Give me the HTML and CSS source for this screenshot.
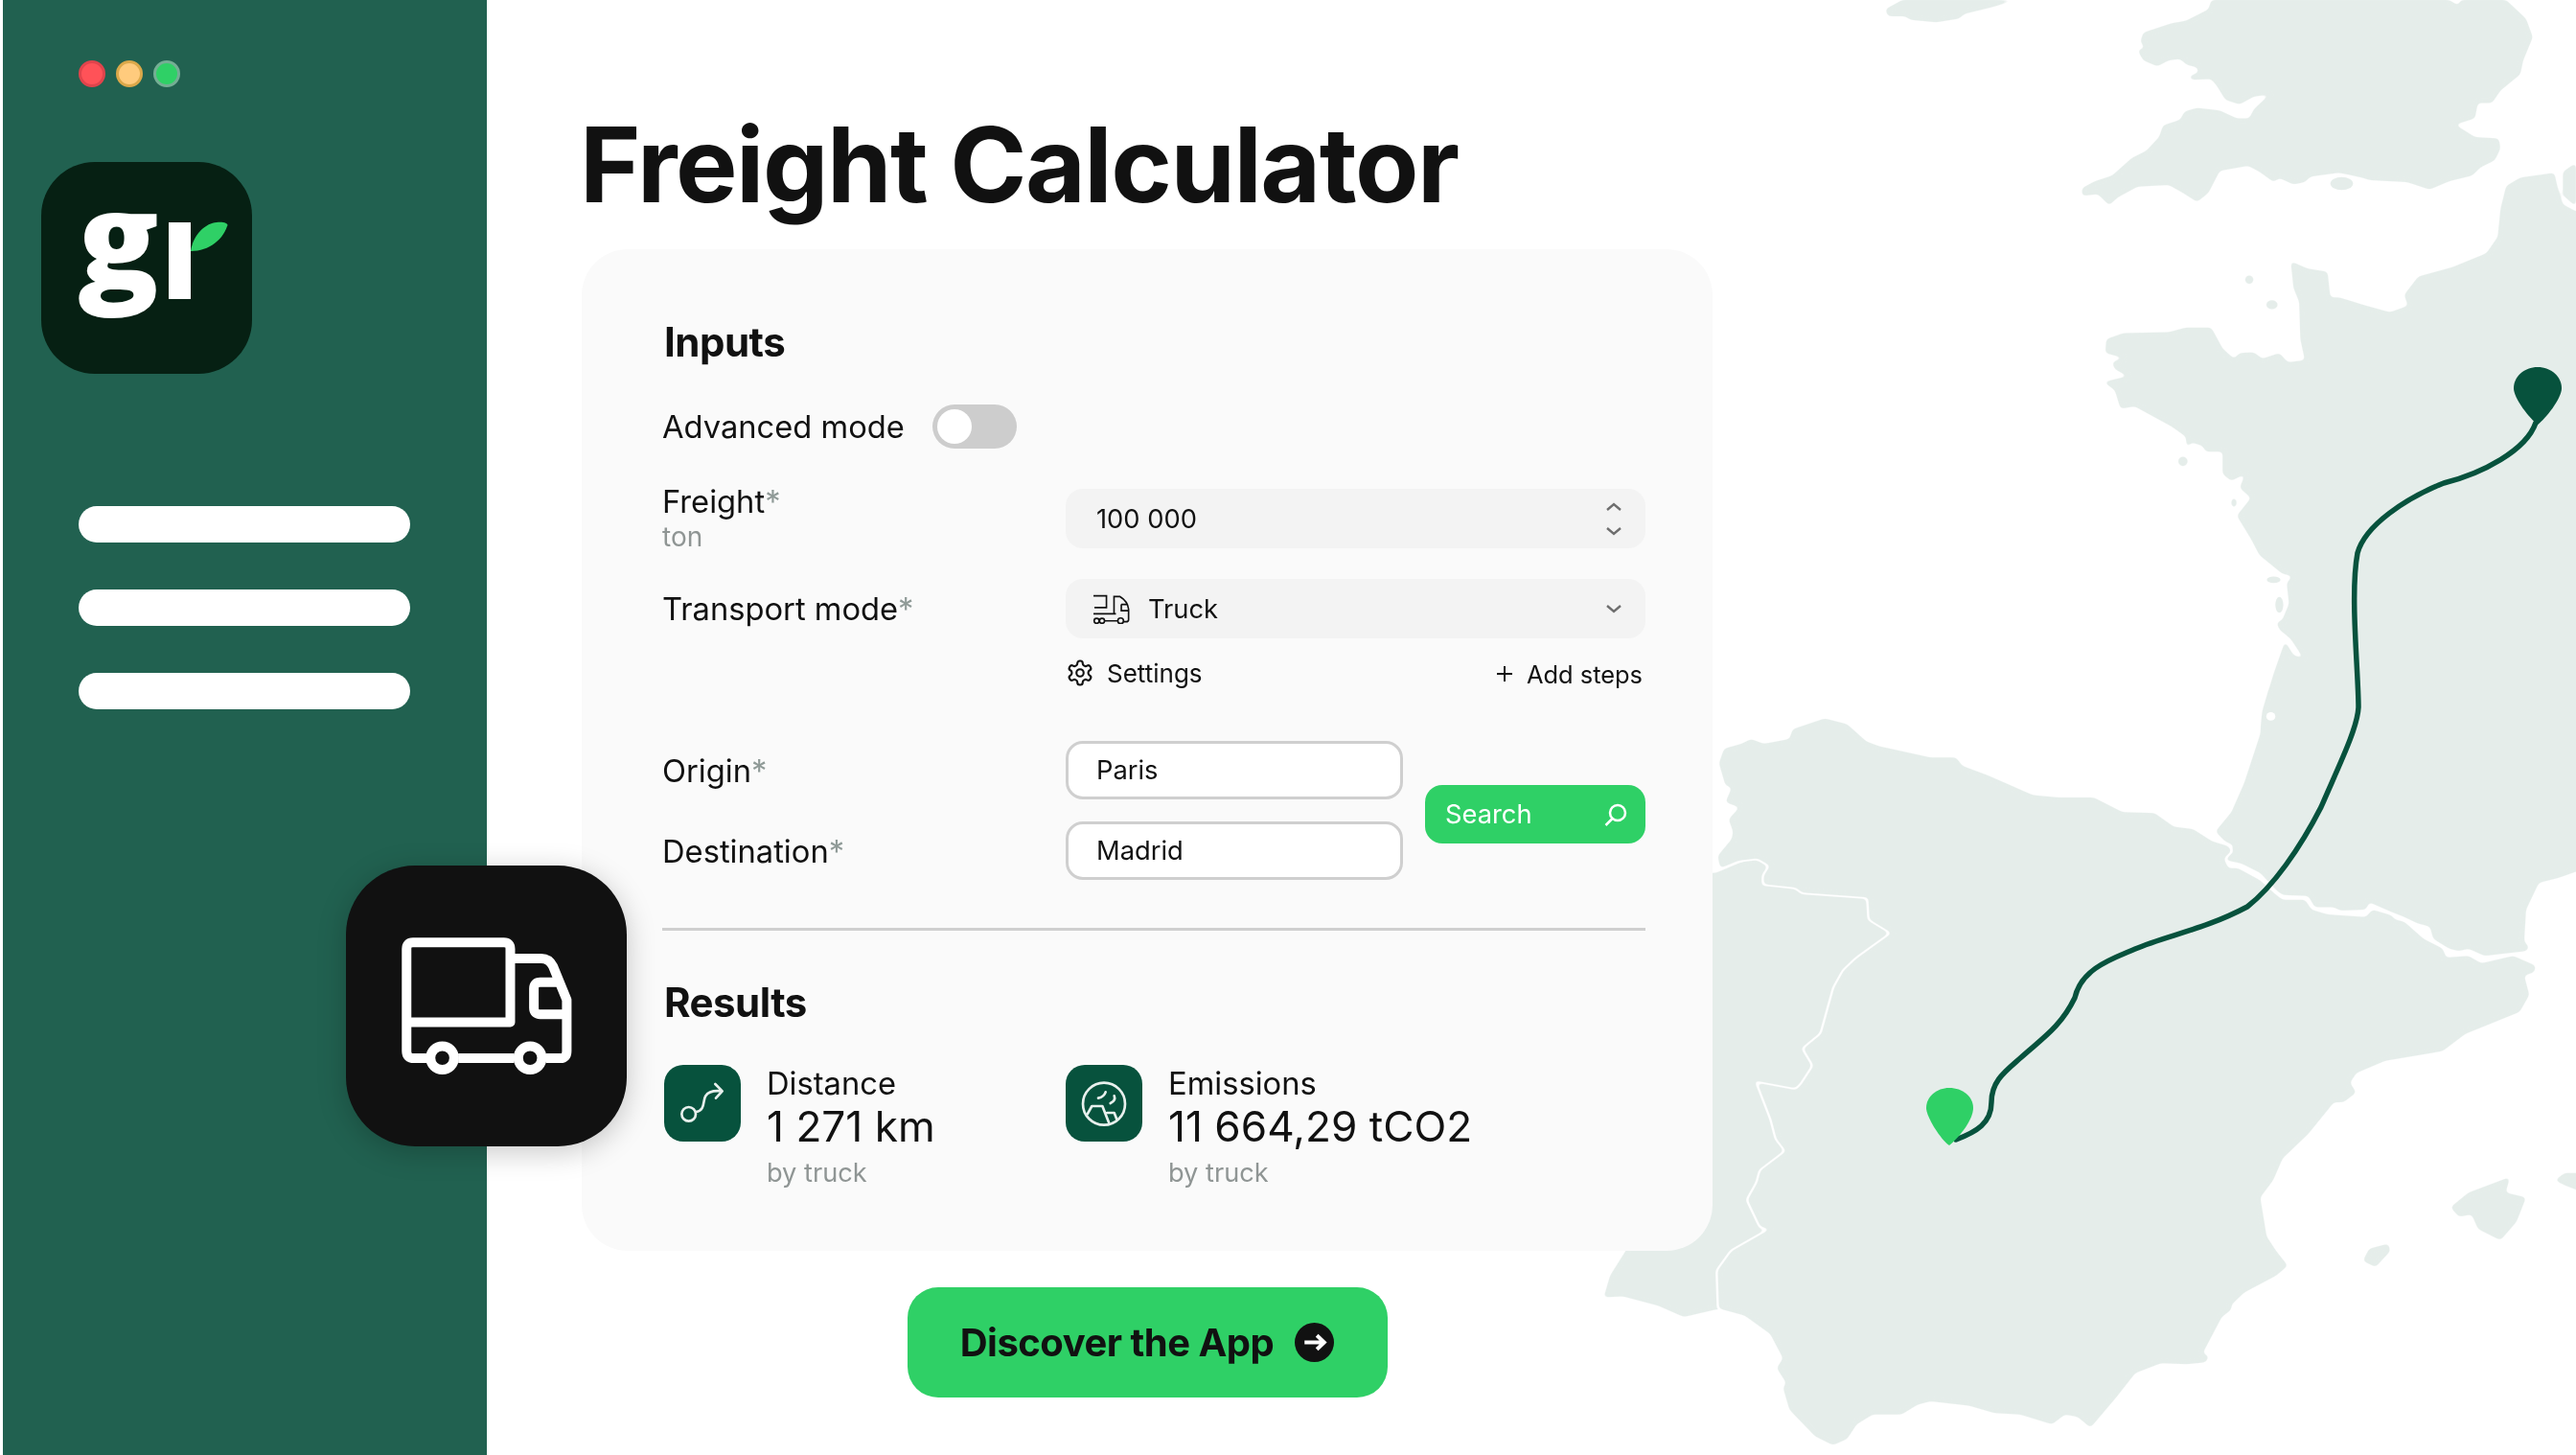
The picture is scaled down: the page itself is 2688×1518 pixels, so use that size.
FILE: index.html
```html
<!DOCTYPE html>
<html lang="en">
<head>
<meta charset="utf-8">
<title>Freight Calculator</title>
<link rel="stylesheet" href="styles.css">
</head>
<body>
<div class="stage">
  <svg class="map" viewBox="0 0 2688 1518" aria-hidden="true">
    <defs>
      <filter id="soft" filterUnits="userSpaceOnUse" x="0" y="0" width="2688" height="1518">
        <feGaussianBlur stdDeviation="2.2"/>
        <feComponentTransfer><feFuncA type="linear" slope="5" intercept="-2"/></feComponentTransfer>
      </filter>
      <path id="spain" d="M230 150L238 120 265 110 280 100 300 110 340 100 345 80 395 58 430 70 460 105 480 115 560 138 600 138 610 155 650 175 720 215 760 220 815 220 860 250 910 252 940 280 970 285 1000 310 1025 320 1030 330 1018 345 1025 365 1040 365 1075 390 1100 420 1110 430 1145 430 1155 450 1180 460 1240 465 1250 450 1280 462 1285 470 1300 475 1330 510 1360 530 1365 548 1400 545 1420 560 1470 545 1505 565 1503 578 1487 585 1495 625 1480 660 1395 705 1360 740 1270 760 1225 785 1215 805 1225 825 1205 845 1190 845 1150 910 1110 960 1095 1005 1075 1040 1085 1120 1100 1150 1118 1180 1100 1200 1050 1235 1030 1260 1030 1270 1015 1285 985 1360 995 1365 990 1378 960 1382 920 1380 880 1400 850 1450 810 1512 790 1490 770 1485 750 1505 700 1485 660 1482 620 1467 560 1458 540 1465 515 1485 470 1485 445 1505 430 1535 408 1548 380 1530 340 1475 330 1430 335 1420 320 1390 330 1370 310 1320 270 1282 230 1268 228 1190 250 1150 290 1120 310 1105 295 1100 275 1045 290 1010 295 985 335 945 320 920 312 880 290 805 350 820 358 810 378 770 362 735 390 705 410 610 425 575 445 550 500 498 465 470 463 425 360 415 350 405 300 398 300 380 310 360 290 345 260 350 232 365 228 340 250 305 252 290 245 265 262 240 240 230 250 200 240 195Z"/>
    </defs>
    <g class="land" filter="url(#soft)">
      <g transform="translate(1760 0) scale(.5918 .4847)">
        <path d="M925 0L920 20 880 45 855 50 805 70 800 90 808 103 795 108 805 130 830 143 850 130 870 127 882 140 900 145 903 155 885 165 890 172 925 170 935 185 950 215 975 225 1000 208 1028 203 1000 235 992 255 970 255 940 238 900 232 878 240 870 258 840 270 833 295 810 325 785 340 750 378 720 390 697 405 697 422 725 418 745 442 760 425 795 402 850 398 875 415 900 435 920 415 940 368 990 357 1010 370 1035 392 1045 383 1070 397 1090 392 1100 380 1150 372 1190 382 1205 388 1270 392 1310 408 1345 390 1385 378 1400 360 1425 345 1435 320 1432 298 1390 295 1355 268 1390 255 1395 222 1420 222 1435 195 1470 160 1475 130 1492 80 1480 40 1445 0 1365 0 1360 12 1345 0Z"/>
        <path d="M380 0L350 20 355 35 385 35 395 43 440 48 480 40 490 30 540 15 580 0Z"/>
        <path d="M320 0L340 5 360 0Z"/>
        <path d="M1530 372L1470 382 1445 400 1435 450 1430 510 1410 545 1350 575 1290 595 1265 635 1272 658 1240 672 1190 655 1150 640 1135 640 1130 585 1095 578 1065 562 1070 620 1080 650 1082 730 1090 775 1060 780 1045 760 1015 772 1000 758 975 760 965 772 945 750 925 705 880 705 850 715 770 717 740 730 738 760 770 770 750 780 755 795 778 810 735 822 755 840 765 880 790 875 855 918 880 940 882 965 890 952 910 960 915 972 945 972 945 1020 960 1035 985 1020 975 1050 995 1072 970 1110 995 1160 1010 1195 1050 1235 1068 1240 1058 1255 1062 1300 1050 1335 1040 1340 1045 1355 1065 1375 1088 1418 1070 1410 1055 1380 1035 1450 1015 1530 1012 1568 2000 1568 2000 455 1568 455 1545 440 1535 400Z"/>
        <path d="M1568 350L1545 370 1545 420 1568 445Z"/>
        <ellipse cx="992" cy="602" rx="8" ry="10"/>
        <ellipse cx="1032" cy="656" rx="11" ry="10"/>
        <ellipse cx="875" cy="993" rx="9" ry="11"/>
        <ellipse cx="965" cy="1082" rx="5" ry="11"/>
      </g>
      <g transform="translate(1640 720) scale(.6684 .5089)">
        <path d="M1088 0L1078 50 1075 90 1050 190 1030 250 1005 290 1020 310 1033 318 1030 335 1020 345 1025 350 1045 355 1075 375 1100 410 1110 420 1150 422 1160 445 1190 445 1200 452 1240 450 1245 435 1280 455 1300 465 1320 478 1340 485 1345 510 1370 530 1385 535 1400 530 1425 545 1490 535 1495 528 1487 515 1490 450 1510 395 1540 385 1640 340 1640 0Z"/>
        <path d="M100 375L225 375 260 355 295 340 320 350 600 400 600 1200 225 1270 175 1285 135 1262 80 1243 50 1245 60 1200 85 1148 100 1100Z"/>
        <path d="M1372 1060L1400 1030 1465 998 1458 1030 1490 1040 1475 1090 1450 1128 1415 1105 1405 1075 1385 1080Z"/>
        <path d="M1235 1170L1245 1145 1275 1135 1278 1150 1255 1183Z"/>
        <path d="M1535 1005L1550 990 1600 990 1600 1040 1550 1015Z"/>
      </g>
    </g>
    <g filter="url(#soft)">
      <use class="halo" href="#spain" transform="translate(1640 720) scale(.6684 .5089)"/>
    </g>
    <g class="land" filter="url(#soft)">
      <use href="#spain" transform="translate(1640 720) scale(.6684 .5089)"/>
    </g>
    <g class="sea" transform="translate(1760 0) scale(.5918 .4847)">
      <ellipse cx="1155" cy="395" rx="26" ry="20"/>
      <ellipse cx="1035" cy="1248" rx="16" ry="14"/>
      <ellipse cx="1045" cy="1302" rx="12" ry="22"/>
      <ellipse cx="1030" cy="1542" rx="8" ry="9"/>
    </g>
    <g class="land" transform="translate(1760 0) scale(.5918 .4847)">
      <ellipse cx="1155" cy="395" rx="20" ry="14"/>
      <ellipse cx="1035" cy="1248" rx="12" ry="7"/>
      <ellipse cx="1045" cy="1302" rx="7" ry="17"/>
    </g>
    <path class="route" d="M2041 1189C2062 1181 2078 1172 2078 1150C2078 1128 2092 1118 2108 1104C2130 1084 2150 1072 2165 1041C2172 1010 2205 1000 2228 990C2260 976 2300 970 2345 946C2372 925 2400 885 2422 842C2440 800 2460 760 2461 738C2461 700 2452 620 2460 577C2468 548 2510 520 2550 504C2590 494 2636 470 2646 441"/>
    <path class="pin-dark" d="M2648 443C2640 437 2623 416 2623 405C2623 393 2634 383 2648 383C2662 383 2673 393 2673 405C2673 416 2656 437 2648 443Z"/>
    <path class="pin-green" d="M2034 1195C2025 1189 2010 1165 2010 1156C2010 1144 2021 1135 2034 1135C2048 1135 2059 1144 2059 1156C2059 1168 2045 1186 2034 1195Z"/>
  </svg>

  <div class="app">
    <aside class="sidebar">
      <div class="dots"><span class="dot dot-red"></span><span class="dot dot-yellow"></span><span class="dot dot-green"></span></div>
      <div class="logo">
        <span class="logo-g">g</span>
        <svg class="logo-mark" viewBox="0 0 220 220" aria-hidden="true">
          <rect x="133" y="63" width="23" height="80" fill="#fff"/>
          <path fill="#2fd066" d="M156 93C158 78 170 64 183 63C192 62 196 65 194 67C190 80 176 93 156 93Z"/>
        </svg>
      </div>
      <nav class="bars"><span class="bar"></span><span class="bar"></span><span class="bar"></span></nav>
    </aside>

    <main class="main">
      <h1 class="title">Freight Calculator</h1>
      <section class="card">
        <h2 class="heading">Inputs</h2>
        <div class="mode-row">
          <span class="label">Advanced mode</span>
          <span class="toggle"><span class="knob"></span></span>
        </div>

        <div class="field-row freight-row">
          <div class="label-stack">
            <span class="label">Freight<i class="req">*</i></span>
            <span class="unit">ton</span>
          </div>
          <div class="input filled">
            <span>100 000</span>
            <span class="spinner">
              <svg class="chev" viewBox="0 0 16 8"><path d="M1 7L8 1L15 7"/></svg>
              <svg class="chev" viewBox="0 0 16 8"><path d="M1 1L8 7L15 1"/></svg>
            </span>
          </div>
        </div>

        <div class="field-row transport-row">
          <span class="label">Transport mode<i class="req">*</i></span>
          <div class="input filled">
            <span class="select-value">
              <svg class="truck-small" viewBox="44 38 118 94">
                <path d="M47 43H88V80H50M47 100H118M112 100V45H130Q155 60 158 85V118Q158 125 150 125H143M124 122H82M135 70H152M135 70V90H158"/>
                <circle cx="57" cy="122" r="8"/><circle cx="74" cy="122" r="8"/><circle cx="133" cy="122" r="9"/>
              </svg>
              Truck
            </span>
            <svg class="chev" viewBox="0 0 16 8"><path d="M1 1L8 7L15 1"/></svg>
          </div>
        </div>

        <div class="field-row links-row">
          <span></span>
          <div class="links">
            <span class="link">
              <svg class="gear" viewBox="0 0 24 24"><path d="M12.22 2h-.44a2 2 0 0 0-2 2v.18a2 2 0 0 1-1 1.73l-.43.25a2 2 0 0 1-2 0l-.15-.08a2 2 0 0 0-2.73.73l-.22.38a2 2 0 0 0 .73 2.73l.15.1a2 2 0 0 1 1 1.72v.51a2 2 0 0 1-1 1.74l-.15.09a2 2 0 0 0-.73 2.73l.22.38a2 2 0 0 0 2.73.73l.15-.08a2 2 0 0 1 2 0l.43.25a2 2 0 0 1 1 1.73V20a2 2 0 0 0 2 2h.44a2 2 0 0 0 2-2v-.18a2 2 0 0 1 1-1.73l.43-.25a2 2 0 0 1 2 0l.15.08a2 2 0 0 0 2.73-.73l.22-.39a2 2 0 0 0-.73-2.73l-.15-.08a2 2 0 0 1-1-1.74v-.5a2 2 0 0 1 1-1.74l.15-.09a2 2 0 0 0 .73-2.73l-.22-.38a2 2 0 0 0-2.73-.73l-.15.08a2 2 0 0 1-2 0l-.43-.25a2 2 0 0 1-1-1.73V4a2 2 0 0 0-2-2z"/><circle cx="12" cy="12" r="3"/></svg>
              Settings
            </span>
            <span class="link link-add">
              <svg class="plus" viewBox="0 0 16 16"><path d="M8 0V16M0 8H16"/></svg>
              Add steps
            </span>
          </div>
        </div>

        <div class="route-grid">
          <span class="label">Origin<i class="req">*</i></span>
          <div class="input outlined">Paris</div>
          <button class="search" type="button">
            Search
            <svg class="search-icon" viewBox="0 0 26 26"><circle cx="15" cy="11" r="8"/><path d="M9.5 17L2.5 24"/></svg>
          </button>
          <span class="label">Destination<i class="req">*</i></span>
          <div class="input outlined">Madrid</div>
        </div>

        <hr class="divider">

        <h2 class="heading results-heading">Results</h2>
        <div class="results">
          <div class="result">
            <span class="result-icon">
              <svg viewBox="25 18 240 240"><circle cx="102" cy="172" r="22"/><path d="M125 165C155 160 145 130 155 115C165 98 185 98 205 100M185 78L207 100L187 122"/></svg>
            </span>
            <div class="result-text">
              <span class="result-name">Distance</span>
              <span class="result-value">1 271 km</span>
              <span class="result-note">by truck</span>
            </div>
          </div>
          <div class="result">
            <span class="result-icon">
              <svg viewBox="20 18 240 240"><circle cx="140" cy="140" r="66"/><path d="M122 122Q140 118 145 103M160 138Q178 130 172 115M88 172L102 147H135L155 198M150 168H172L180 188"/></svg>
            </span>
            <div class="result-text">
              <span class="result-name">Emissions</span>
              <span class="result-value">11 664,29 tCO2</span>
              <span class="result-note">by truck</span>
            </div>
          </div>
        </div>
      </section>
      <a class="cta">
        Discover the App
        <svg class="cta-arrow" viewBox="35 26 124 124"><circle cx="97" cy="88" r="62"/><path d="M66 88H126M105 66L128 88L105 110"/></svg>
      </a>
    </main>
  </div>

  <div class="truck-tile">
    <svg viewBox="63 70 880 878">
      <path d="M273 310H558Q578 310 578 330V560H253V330Q253 310 273 310ZM253 560V650Q253 673 276 673H316M415 673H590M690 673H735Q755 673 755 650V490L712 385Q700 360 675 360H593M725 435H672Q652 435 652 455V515Q652 535 672 535H755"/>
      <circle cx="365" cy="672" r="37"/><circle cx="640" cy="672" r="37"/>
    </svg>
  </div>
</div>
</body>
</html>
```
FILE: styles.css
```css
* { box-sizing: border-box; }
html, body { margin: 0; padding: 0; background: #fff; }
body { font-family: Inter, "Liberation Sans", sans-serif; color: #111; }

.stage { position: relative; width: 2688px; height: 1518px; overflow: hidden; background: #fff; }

.map { position: absolute; inset: 0; width: 2688px; height: 1518px; }
.land { fill: #e5edea; }
.sea { fill: #fff; }
.halo { fill: #fff; stroke: #fff; stroke-width: 7px; vector-effect: non-scaling-stroke; }
.route { fill: none; stroke: #07523d; stroke-width: 5.5px; stroke-linecap: round; }
.pin-dark { fill: #07523d; }
.pin-green { fill: #2fd066; }

.app { position: relative; display: flex; height: 100%; }

.sidebar { width: 505px; margin-left: 3px; background: #216150; padding: 63px 0 0 79px; flex: none; }
.dots { display: flex; gap: 11px; }
.dot { width: 28px; height: 28px; border-radius: 50%; border: 3px solid; }
.dot-red { background: #ff5258; border-color: #e0444c; }
.dot-yellow { background: #ffcb7d; border-color: #dba84a; }
.dot-green { background: #2fd066; border-color: #74ae94; }
.logo { position: relative; width: 220px; height: 221px; margin: 78px 0 0 -39px; background: #062013; border-radius: 56px; }
.logo-g { position: absolute; left: 38px; top: 10px; font-family: "Open Sans", sans-serif; font-weight: 800; font-size: 136px; line-height: 136px; color: #fff; transform: scaleX(1.03); transform-origin: left center; }
.logo-mark { position: absolute; left: 0; top: 0; width: 220px; height: 220px; }
.bars { display: flex; flex-direction: column; gap: 49px; margin-top: 138px; }
.bar { display: block; width: 346px; height: 38px; border-radius: 19px; background: #fff; }

.main { display: flex; flex-direction: column; margin-left: 99px; width: 1180px; padding-top: 112px; }
.title { margin: 0 0 0 -2px; font-size: 108.4px; line-height: 120px; font-weight: 700; letter-spacing: -1.5px; }

.card { height: 1045px; margin-top: 28px; padding: 72px 70px 0 84px; background: #fafafa; border-radius: 48px; }
.heading { margin: 0 0 0 2px; font-size: 42px; line-height: 50px; font-weight: 650; letter-spacing: -.5px; }

.label { font-size: 32.7px; line-height: 44px; }
.req { font-style: normal; color: #8f9a97; }
.mode-row { display: flex; align-items: center; gap: 29px; margin-top: 40px; height: 46px; }
.toggle { display: block; width: 88px; height: 46px; padding: 5px; border-radius: 23px; background: #cdcdcd; }
.knob { display: block; width: 36px; height: 36px; border-radius: 50%; background: #fff; }

.field-row { display: grid; grid-template-columns: 421px 1fr; }
.freight-row { margin-top: 42px; grid-template-rows: 62px; }
.transport-row { margin-top: 32px; align-items: center; }
.links-row { margin-top: 16px; }
.label-stack { display: flex; flex-direction: column; gap: 7px; }
.label-stack .label { line-height: 30px; margin-top: -2px; }
.unit { font-size: 28px; line-height: 30px; color: #8f9594; }

.input { display: flex; align-items: center; justify-content: space-between; height: 62px; padding: 0 25px 0 32px; font-size: 27.3px; }
.filled { background: #f3f3f3; border-radius: 18px; }
.outlined { justify-content: flex-start; height: 61px; background: #fff; border: 3px solid #cfcfcf; border-radius: 18px; padding-left: 29px; }
.spinner { display: flex; flex-direction: column; gap: 17px; margin-top: 1px; }
.chev { display: block; width: 16px; height: 8px; fill: none; stroke: #6e6e6e; stroke-width: 2.4px; overflow: visible; }
.select-value { display: flex; align-items: center; gap: 19px; margin-left: -4px; }
.truck-small { width: 39px; height: 31px; fill: none; stroke: #111; stroke-width: 5px; }

.links { display: flex; justify-content: space-between; align-items: center; height: 40px; padding: 0 3px 0 0; }
.link { display: flex; align-items: center; font-size: 26px; }
.link-add { font-size: 25.4px; padding-top: 2px; }
.gear { width: 30px; height: 30px; margin-right: 13px; fill: none; stroke: #111; stroke-width: 1.7px; }
.plus { width: 16px; height: 16px; margin-right: 15px; fill: none; stroke: #111; stroke-width: 2px; }

.route-grid { display: grid; grid-template-columns: 421px 352px 1fr; grid-auto-rows: 61px; row-gap: 23px; align-items: center; margin-top: 51px; }
.search { grid-column: 3; grid-row: 1 / span 2; justify-self: end; align-self: center; display: flex; align-items: center; justify-content: space-between; width: 230px; height: 61px; margin-top: 8px; padding: 0 18px 0 21px; border: 0; border-radius: 18px; background: #2fd066; color: #fff; font: 400 27.3px Inter, sans-serif; }
.search-icon { width: 26px; height: 26px; fill: none; stroke: #fff; stroke-width: 2.5px; }

.divider { margin: 50px 0 0 0; height: 3px; border: 0; background: #cfcfcf; }
.results-heading { margin-top: 50px; }
.results { display: grid; grid-template-columns: 419px 1fr; margin: 40px 0 0 2px; }
.result { display: flex; gap: 27px; }
.result-icon { display: block; flex: none; width: 80px; height: 80px; border-radius: 20px; background: #07523d; }
.result-icon svg { display: block; width: 80px; height: 80px; fill: none; stroke: #e8f0ed; stroke-width: 8px; stroke-linecap: round; stroke-linejoin: round; }
.result-text { display: flex; flex-direction: column; }
.result-name { font-size: 32.7px; line-height: 36px; margin-top: 1px; }
.result-value { font-size: 44.2px; line-height: 50px; margin-top: 2px; }
.result-note { font-size: 27.2px; line-height: 36px; margin-top: 6px; color: #8f9594; }

.cta { display: flex; align-items: center; justify-content: center; gap: 22px; align-self: center; width: 501px; height: 115px; margin-top: 38px; border-radius: 32px; background: #2fd066; font-size: 40px; font-weight: 700; letter-spacing: -.5px; color: #111; }
.cta-arrow { width: 41px; height: 41px; }
.cta-arrow circle { fill: #111; }
.cta-arrow path { fill: none; stroke: #fff; stroke-width: 12px; }

.truck-tile { position: absolute; left: 361px; top: 903px; width: 293px; height: 293px; border-radius: 72px; background: #111; box-shadow: 0 6px 30px rgba(0,0,0,.22); }
.truck-tile svg { display: block; width: 293px; height: 293px; fill: none; stroke: #fff; stroke-width: 30px; stroke-linejoin: round; }
```
